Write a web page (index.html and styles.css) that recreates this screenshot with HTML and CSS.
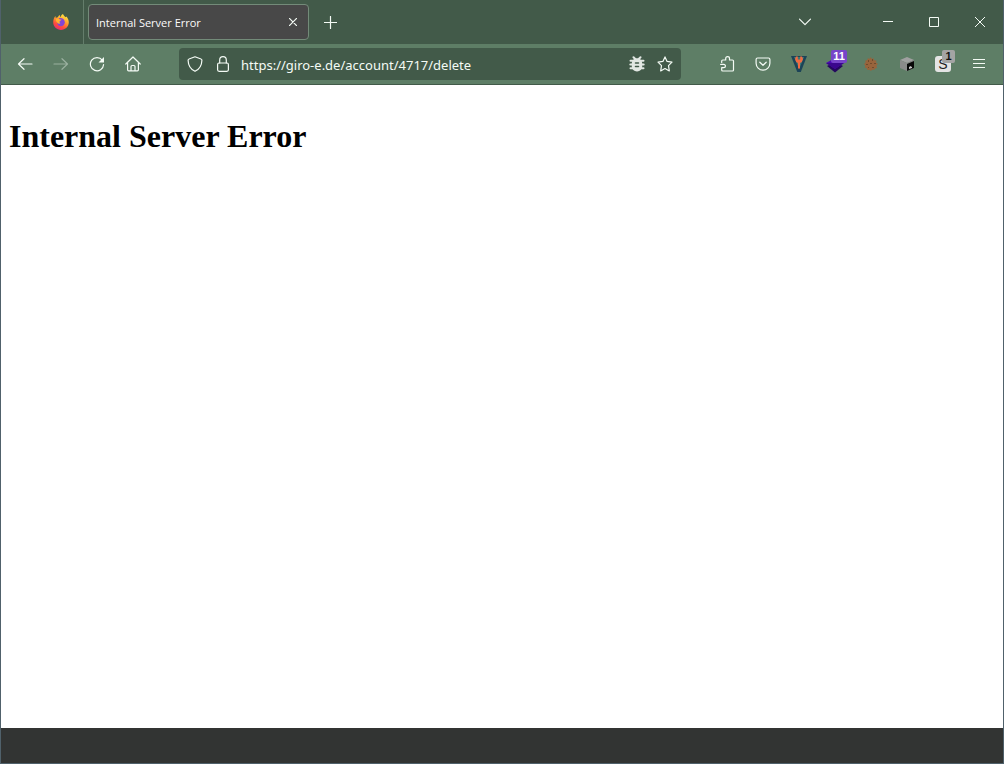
FILE: index.html
```html
<!DOCTYPE html>
<html lang="en">
<head>
  <meta charset="UTF-8">
  <title>Internal Server Error</title>
  <meta name="viewport" content="width=device-width, initial-scale=1">
  <link rel="stylesheet" href="styles.css">
</head>
<body>
  <div class="window">
    <header class="titlebar">
      <button class="firefox-view" aria-label="Firefox View">
        <svg width="18" height="18" viewBox="0 0 18 18">
          <defs>
            <linearGradient id="flame" x1="0.8" y1="0" x2="0.3" y2="1">
              <stop offset="0" stop-color="#fff04a"/>
              <stop offset="0.4" stop-color="#ffa52e"/>
              <stop offset="0.75" stop-color="#ff4a3d"/>
              <stop offset="1" stop-color="#e62b78"/>
            </linearGradient>
          </defs>
          <path fill="url(#flame)" d="M11 1c.5 1.600 1.600 2.200 2.500 3.300l.8-.8c1.700 1.600 2.500 3.600 2.500 5.800 0 4.300-3.400 7.600-7.800 7.600S1.200 13.500 1.200 9.300c0-2.500.9-4.500 2.200-6.200l.4 1.800c.6-.5 1.300-.7 2-.7.8-1.300 1.300-1.800 2-2.200 0 1 .2 1.600.8 2.200C8.800 2.800 9.700 1.700 11 1z"/>
          <path fill="#8245d5" d="M7 5.200c2.300-.8 5.800.6 5.800 4.100 0 2.400-1.700 3.900-3.800 3.900-2 0-3.500-1.300-3.700-3z"/>
          <path fill="#ffb22e" d="M4 6c1-.8 2.200-.8 3.200-.1.700.5 1.400.5 2.300.6-.1.900-1.300 1.100-1.800 1.700-.3.700-.2 1.500.7 2-.9.800-2.400.5-3.200-.8L4 8z"/>
        </svg>
      </button>
      <div class="tab">
        <span class="tab-label">Internal Server Error</span>
        <button class="tab-close" aria-label="Close tab">
          <svg width="8" height="8" viewBox="0 0 8 8"><path d="M.4.4l7.200 7.200M7.600.4L.4 7.600"/></svg>
        </button>
      </div>
      <button class="new-tab" aria-label="New tab">
        <svg width="13" height="13" viewBox="0 0 13 13"><path d="M6.500.5v12M.5 6.500h12"/></svg>
      </button>
      <div class="drag-space"></div>
      <button class="all-tabs" aria-label="List all tabs">
        <svg width="12" height="12" viewBox="0 0 12 12"><path d="M.5 3.200L6 8.700l5.500-5.500"/></svg>
      </button>
      <div class="window-controls">
        <button aria-label="Minimize"><svg width="10" height="10" viewBox="0 0 10 10"><path d="M0 4.500h10"/></svg></button>
        <button aria-label="Maximize"><svg width="10" height="10" viewBox="0 0 10 10"><path d="M.5.5h9v9h-9z"/></svg></button>
        <button aria-label="Close"><svg width="10" height="10" viewBox="0 0 10 10"><path d="M0 0l10 10M10 0L0 10"/></svg></button>
      </div>
    </header>

    <nav class="toolbar">
      <div class="buttons">
        <button class="tool" aria-label="Back">
          <svg width="16" height="16" viewBox="0 0 16 16"><path d="M15 8H1.500M7 2.700L1.500 8 7 13.300"/></svg>
        </button>
        <button class="tool" aria-label="Forward" disabled>
          <svg width="16" height="16" viewBox="0 0 16 16"><path d="M1 8h13.500M9 2.700L14.500 8 9 13.300"/></svg>
        </button>
        <button class="tool" aria-label="Reload">
          <svg width="16" height="16" viewBox="0 0 16 16"><path d="M13.300 4.200A6.600 6.600 0 1 0 14.600 8.500"/><path class="solid" d="M15 1v5.500H9.500z"/></svg>
        </button>
        <button class="tool" aria-label="Home">
          <svg width="16" height="16" viewBox="0 0 16 16"><path d="M.8 8L8 1l7.200 7M2.600 6.500v7.300c0 .6.400 1 1 1h8.800c.6 0 1-.4 1-1V6.500M6 14.500v-4c0-.6.400-1 1-1h2c.6 0 1 .4 1 1v4"/></svg>
        </button>
      </div>

      <div class="urlbar">
        <button class="url-icon" aria-label="Tracking protection">
          <svg width="16" height="16" viewBox="0 0 16 16"><path d="M8 .8l6 2.200c.6.200.9.600.9 1.200-.1 4.800-2.300 8.900-6.900 11.100C3.400 13.100 1.200 9 1.100 4.200 1.100 3.600 1.400 3.200 2 3z"/></svg>
        </button>
        <button class="url-icon" aria-label="Connection secure">
          <svg width="16" height="16" viewBox="0 0 16 16"><rect x="2.600" y="7" width="10.800" height="8.300" rx="1.500"/><path d="M4.700 7V4a3.300 3.300 0 0 1 6.600 0v3"/></svg>
        </button>
        <input class="url" type="text" aria-label="Address" value="https://giro-e.de/account/4717/delete" spellcheck="false">
        <button class="url-icon" aria-label="Report a bug">
          <svg width="16" height="16" viewBox="0 0 16 16">
            <path class="thick" d="M4.500 1.200l2 2M11.500 1.200l-2 2M1.500 4.800h13M1.300 8.500h13.400M1.500 12.200h13"/>
            <rect class="solid" x="2.800" y="2.200" width="10.400" height="13.300" rx="5"/>
            <path class="cut" d="M6.500 7h3M6.500 10.500h3"/>
          </svg>
        </button>
        <button class="url-icon" aria-label="Bookmark this page">
          <svg width="16" height="16" viewBox="0 0 16 16"><path d="M8 .9l2.100 4.500 4.900.7-3.500 3.500.8 5.300L8 12.500l-4.300 2.400.8-5.300L1 6.100l4.900-.7z"/></svg>
        </button>
      </div>

      <div class="buttons">
        <button class="tool" aria-label="Extensions">
          <svg width="16" height="16" viewBox="0 0 16 16"><path d="M2.700 6.500V5c0-.7.400-1 1-1h3V2.500a1.900 1.900 0 0 1 3.800 0V4h3c.7 0 1 .4 1 1v9c0 .7-.4 1-1 1H3.700c-.7 0-1-.4-1-1v-2.300h2.100a1.600 1.600 0 0 0 0-3.300H1.700"/></svg>
        </button>
        <button class="tool" aria-label="Pocket">
          <svg width="16" height="16" viewBox="0 0 16 16"><path d="M2.500 2h11c.8 0 1.400.6 1.400 1.400v3.800a6.900 6.900 0 0 1-13.800 0V3.400C1.100 2.600 1.700 2 2.500 2z"/><path d="M4.800 6.200L8 9.300l3.200-3.100"/></svg>
        </button>
        <button class="tool" aria-label="Passwords">
          <svg class="art" width="16" height="16" viewBox="0 0 16 16">
            <path fill="#1c4358" d="M0 0h16L9.800 16H6.300z"/>
            <path fill="#3f7773" d="M3 1h10l-4.800 12z"/>
            <path fill="#ef6b42" d="M5 .5h1.800v3h2.400v-3H11l1 2.500-1.200 3-1.800 1v5.500H7V7L5.200 6 4 3z"/>
          </svg>
        </button>
        <button class="tool" aria-label="Layers, 11 items">
          <svg class="art" width="18" height="18" viewBox="0 0 18 18">
            <path fill="#25075f" d="M1 11l3-1.500h10l3 1.500-8 6.500z"/>
            <path fill="#4b08b5" d="M0 8l9-5 9 5-9 6z"/>
            <path fill="#3a078d" d="M0 8h18l-9 6z"/>
          </svg>
          <span class="badge purple">11</span>
        </button>
        <button class="tool" aria-label="Cookies">
          <svg class="art" width="14" height="14" viewBox="0 0 14 14">
            <path fill="#98643c" d="M4 1l1.300 1L7 0l.7 2 2-.8.3 2 2.500.3-.4 2L14 7l-1.600 1.400.6 2.500-2 .5-.8 1.600-2-.4L7 14l-1.500-1.200-2.200.3-.4-1.800-2-.6.5-2L0 7l1.500-1.300-.3-2 2-.6z"/>
            <path fill="#6f4c2d" d="M4 3h1v2H4zM8 2h1v2H8zM10 6h2v1h-2zM6 6h2v1H6zM2 7h2v1H2zM4 10h1v1H4zM8 10h2v1H8z"/>
          </svg>
        </button>
        <button class="tool" aria-label="Black box">
          <svg class="art" width="14" height="14" viewBox="0 0 14 14">
            <path fill="#a0a0a0" d="M0 3l7-3 7 3-7 3z"/>
            <path fill="#8a8a8a" d="M0 3l7 3v8l-7-3z"/>
            <path fill="#858585" d="M7 6l7-3v8l-7 3z"/>
            <path fill="#080808" d="M7 7l7-3v7l-7 3z"/>
            <path fill="#c9c9c9" d="M9 10l2-1v1l1-.4v1.400l-3 1z"/>
          </svg>
        </button>
        <button class="tool" aria-label="Stylus, 1 style">
          <span class="stylus">S</span>
          <span class="badge gray">1</span>
        </button>
        <button class="tool" aria-label="Open application menu">
          <svg width="12" height="12" viewBox="0 0 12 12"><path d="M0 1.500h12M0 5.500h12M0 9.500h12"/></svg>
        </button>
      </div>
    </nav>

    <main class="page">
      <h1>Internal Server Error</h1>
    </main>
    <footer class="bottom-bar"></footer>
  </div>
</body>
</html>
```
FILE: styles.css
```css
* { box-sizing: border-box; }
body { margin: 0; font-family: "Open Sans", "Noto Sans", sans-serif; }
button { display: flex; align-items: center; justify-content: center; flex: none; margin: 0; padding: 0; border: none; background: none; color: #f4fbf5; }
svg { display: block; fill: none; stroke: #f4fbf5; stroke-width: 1.2; stroke-linecap: round; stroke-linejoin: round; }

.window { display: flex; flex-direction: column; min-height: 100vh; border: 1px solid #50616b; border-top: none; }

/* tab strip */
.titlebar { display: flex; align-items: center; height: 44px; background: #425a49; }
.firefox-view { width: 83px; height: 44px; padding-left: 38px; border-right: 1px solid #647d6b; }
.firefox-view svg { stroke: none; }
.tab { display: flex; align-items: center; width: 221px; height: 36px; margin-left: 4px; padding: 0 4px 0 7px; border: 1px solid #738b79; border-radius: 4px; background: #484848; color: #fbfbfb; }
.tab-label { flex: 1; padding-top: 2px; font-size: 11px; line-height: 16px; white-space: nowrap; }
.tab-close { width: 22px; height: 24px; }
.new-tab { width: 35px; height: 36px; margin-left: 4px; }
.drag-space { flex: 1; }
.all-tabs { width: 36px; height: 36px; margin-right: 42px; }
.window-controls { display: flex; }
.window-controls button { width: 46px; height: 44px; }
.window-controls svg { stroke-width: 1; stroke-linecap: butt; stroke-linejoin: miter; }

/* navigation */
.toolbar { display: flex; align-items: center; gap: 28px; height: 41px; padding: 0 6px; border-bottom: 1px solid #425a49; background: #5e7e66; }
.buttons { display: flex; }
.tool { position: relative; width: 36px; height: 40px; }
.tool:disabled { opacity: 0.4; }
.tool .art { stroke: none; }
.solid { fill: #f4fbf5; stroke: none; }

.urlbar { display: flex; align-items: center; flex: 1; min-width: 0; height: 32px; padding: 0 2px; border-radius: 4px; background: #425a49; }
.url-icon { width: 28px; height: 28px; }
.urlbar .thick { stroke: #e2e7e3; stroke-width: 2; }
.urlbar .solid { fill: #e2e7e3; }
.urlbar .cut { stroke: #425a49; stroke-width: 1.5; }
.url { flex: 1; min-width: 0; height: 28px; padding: 2px 4px 0; border: none; outline: none; background: none; color: #f4fbf5; font-family: "Noto Sans", sans-serif; font-size: 13px; }

.badge { position: absolute; top: 6px; right: 6px; padding: 0 2px; border-radius: 2px; font-family: "Liberation Sans", sans-serif; font-size: 11px; font-weight: bold; line-height: 13px; text-align: center; }
.purple { min-width: 16px; background: #7745c9; color: #fff; }
.gray { min-width: 13px; background: #a4a4a4; color: #111; }
.stylus { width: 16px; height: 16px; border-radius: 3px; background: #e4e4e4; color: #222; font-size: 14px; line-height: 16px; }

/* content */
.page { flex: 1; padding: 8px; background: #fff; }
.page h1 { margin: 25px 0; color: #000; font-family: "Liberation Serif", serif; font-size: 32px; line-height: 37px; }
.bottom-bar { height: 35px; background: #323433; }
```
